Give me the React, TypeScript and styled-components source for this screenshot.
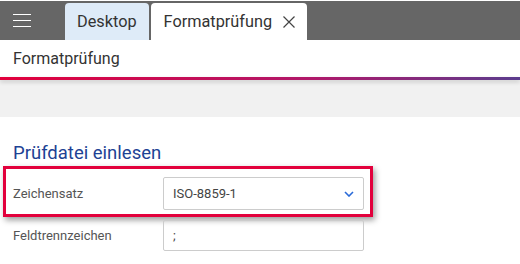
import React from "react";
import styled, { createGlobalStyle } from "styled-components";

const GlobalStyle = createGlobalStyle`
    html, body {
        margin: 0;
        padding: 0;
        background: #fff;
        font-family: Roboto, "Liberation Sans", sans-serif;
    }
`;

export default function App() {
    return (
        <>
            <GlobalStyle />
            <Page>
                <TopBar>
                    <MenuButton aria-label="Menü">
                        <MenuLine />
                        <MenuLine />
                        <MenuLine />
                    </MenuButton>
                    <Tab>Desktop</Tab>
                    <Tab active>
                        Formatprüfung
                        <CloseIcon viewBox="0 0 12 12">
                            <path d="M0.5 0.5 L11.5 11.5 M11.5 0.5 L0.5 11.5" />
                        </CloseIcon>
                    </Tab>
                </TopBar>
                <SubHeader>Formatprüfung</SubHeader>
                <AccentLine />
                <GrayBand />
                <Card>
                    <SectionTitle>Prüfdatei einlesen</SectionTitle>
                    <Highlight>
                        <FieldRow>
                            <FieldLabel>Zeichensatz</FieldLabel>
                            <SelectBox>
                                ISO-8859-1
                                <Chevron viewBox="0 0 10 6">
                                    <polyline points="1,1 5,5 9,1" />
                                </Chevron>
                            </SelectBox>
                        </FieldRow>
                    </Highlight>
                    <PlainRow>
                        <FieldLabel>Feldtrennzeichen</FieldLabel>
                        <TextInput>;</TextInput>
                    </PlainRow>
                </Card>
            </Page>
        </>
    );
}

const Page = styled.div`
    width: 520px;
    height: 264px;
    overflow: hidden;
    display: flex;
    flex-direction: column;
`;
const TopBar = styled.div`
    display: flex;
    align-items: flex-end;
    height: 39px;
    margin-top: 1px;
    background: #666;
`;
const MenuButton = styled.div`
    width: 65px;
    height: 100%;
    display: flex;
    flex-direction: column;
    justify-content: center;
    gap: 4.5px;
    padding-left: 13px;
    box-sizing: border-box;
`;
const MenuLine = styled.span`
    display: block;
    width: 18px;
    height: 1.5px;
    background: #fff;
`;
const Tab = styled.div<{ active?: boolean }>`
    display: flex;
    align-items: center;
    gap: 11px;
    height: 37px;
    margin-right: 2px;
    padding: 0 12px 0 ${(p) => (p.active ? "13px" : "12px")};
    border-radius: 4px 4px 0 0;
    background: ${(p) => (p.active ? "#fff" : "#deebf8")};
    color: #333;
    font-size: 16.3px;
`;
const CloseIcon = styled.svg`
    width: 12px;
    height: 12px;
    stroke: #444;
    stroke-width: 1.2;
    fill: none;
`;
const SubHeader = styled.div`
    display: flex;
    align-items: center;
    height: 37px;
    padding-left: 13px;
    color: #333;
    font-size: 16px;
    background: #fff;
`;
const AccentLine = styled.div`
    height: 3px;
    background: linear-gradient(90deg, #e2003c 0%, #b0186a 60%, #5b3d8e 100%);
    box-shadow: 0 2px 4px rgba(0, 0, 0, 0.18);
    position: relative;
    z-index: 1;
`;
const GrayBand = styled.div`
    height: 37px;
    background: #f1f1f1;
`;
const Card = styled.div`
    flex: 1;
    background: #fff;
    padding-top: 24px;
`;
const SectionTitle = styled.h2`
    margin: 0 0 1px 13px;
    font-size: 18.5px;
    line-height: 24px;
    font-weight: 400;
    color: #1d4294;
`;
const Highlight = styled.div`
    width: 370px;
    margin-left: 3px;
    border: 3px solid #e2003c;
    box-sizing: border-box;
    box-shadow: 2px 3px 6px rgba(0, 0, 0, 0.4);
`;
const FieldRow = styled.div`
    display: flex;
    align-items: center;
    padding: 8px 0 4px 7px;
`;
const PlainRow = styled.div`
    display: flex;
    align-items: center;
    padding: 3px 0 0 13px;
`;
const FieldLabel = styled.div`
    width: 150px;
    font-size: 13px;
    color: #555;
`;
const SelectBox = styled.div`
    display: flex;
    align-items: center;
    justify-content: space-between;
    width: 201px;
    height: 33px;
    padding: 0 9px;
    box-sizing: border-box;
    border: 1px solid #ccc;
    border-radius: 2px;
    font-size: 13px;
    color: #444;
`;
const Chevron = styled.svg`
    width: 10px;
    height: 6px;
    fill: none;
    stroke: #2a6ad8;
    stroke-width: 1.6;
`;
const TextInput = styled.div`
    display: flex;
    align-items: center;
    width: 201px;
    height: 31px;
    padding: 0 9px;
    box-sizing: border-box;
    border: 1px solid #ccc;
    border-radius: 2px;
    font-size: 13px;
    color: #444;
`;
